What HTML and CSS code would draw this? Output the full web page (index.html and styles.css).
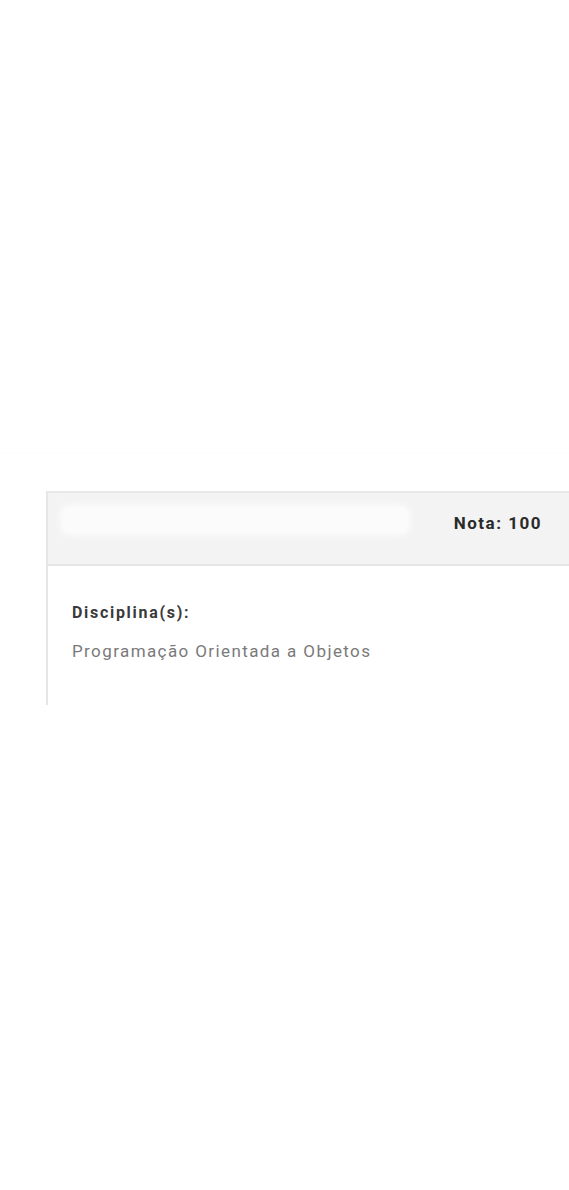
FILE: index.html
```html
<!DOCTYPE html>
<html lang="pt">
<head>
<meta charset="utf-8">
<link rel="stylesheet" href="styles.css">
</head>
<body>
<div class="page">
  <div class="rule"></div>
  <section class="card">
    <header class="card-head">
      <div class="title-bar"></div>
      <span class="grade">Nota: 100</span>
    </header>
    <div class="card-body">
      <div class="label">Disciplina(s):</div>
      <div class="value">Programação Orientada a Objetos</div>
    </div>
  </section>
</div>
</body>
</html>
```
FILE: styles.css
```css
html, body {
  margin: 0;
  padding: 0;
  background: #ffffff;
}
.page {
  width: 569px;
  height: 1190px;
  overflow: hidden;
  font-family: Roboto, "Liberation Sans", sans-serif;
}
.rule {
  margin-top: 453px;
  height: 1px;
  background: #fcfcfc;
}
.card {
  margin-top: 37px;
  margin-left: 46px;
  border-left: 2px solid #e6e6e6;
  border-top: 2px solid #e8e8e8;
  height: 212px;
}
.card-head {
  height: 73px;
  background: #f3f3f3;
  border-bottom: 2px solid #e6e6e6;
  display: flex;
  align-items: flex-start;
  padding: 14px 27px 0 15px;
  box-sizing: border-box;
}
.title-bar {
  width: 345px;
  height: 26px;
  background: #fbfbfb;
  border-radius: 8px;
  box-shadow: 0 0 6px 3px #fbfbfb;
}
.grade {
  margin-left: auto;
  margin-top: 7px;
  font-size: 17px;
  font-weight: 700;
  letter-spacing: 1.5px;
  color: #2a2a2a;
  line-height: 18px;
}
.card-body {
  padding: 38px 0 0 24px;
}
.label {
  font-size: 16px;
  font-weight: 700;
  letter-spacing: 1.7px;
  color: #3a3a3a;
  line-height: 18px;
}
.value {
  margin-top: 20px;
  font-size: 17px;
  letter-spacing: 1.4px;
  color: #7a7a7a;
  line-height: 18px;
}
```
